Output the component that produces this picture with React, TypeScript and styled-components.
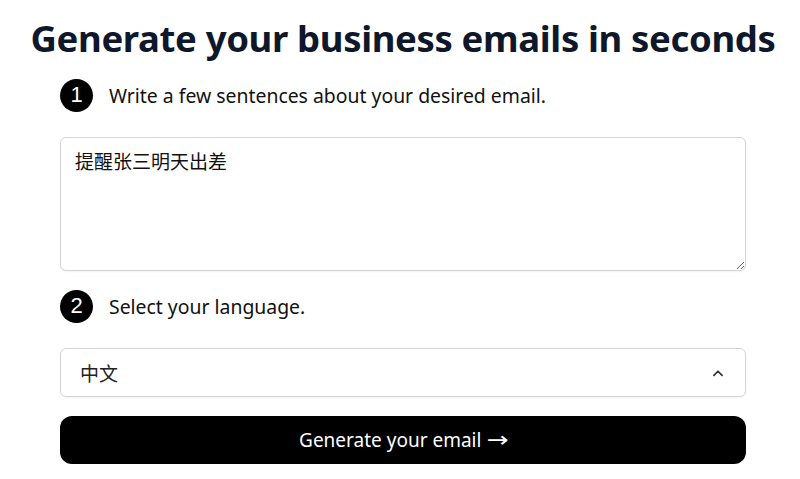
import React from "react";
import styled, { createGlobalStyle } from "styled-components";

const Global = createGlobalStyle`
  html, body { margin: 0; padding: 0; background: #fff; }
  body { font-family: "Noto Sans", "Noto Sans CJK SC", sans-serif; color: #000; }
`;

const Page = styled.main`
  display: flex;
  flex-direction: column;
  align-items: center;
  padding: 12px 0 0 6px;
`;

const Title = styled.h1`
  margin: 0;
  font-family: "Noto Sans", "Noto Sans CJK SC", sans-serif;
  font-weight: 700;
  font-size: 36.5px;
  line-height: 52px;
  color: #0f172a;
  letter-spacing: -0.35px;
  white-space: nowrap;
`;

const Form = styled.div`
  width: 686px;
  display: flex;
  flex-direction: column;
  margin-top: 14px;
`;

const Step = styled.div`
  display: flex;
  align-items: center;
  gap: 16px;
  height: 34px;
`;

const Badge = styled.span`
  width: 33px;
  height: 33px;
  border-radius: 50%;
  background: #000;
  color: #fff;
  display: flex;
  align-items: center;
  justify-content: center;
  font-family: "Liberation Sans", sans-serif;
  font-size: 22px;
`;

const StepLabel = styled.span`
  font-size: 19.4px;
  color: #111;
`;

const TextArea = styled.textarea`
  margin-top: 25px;
  box-sizing: border-box;
  width: 686px;
  height: 134px;
  border: 1px solid #d4d4d8;
  border-radius: 6px;
  padding: 9px 14px;
  font-family: "Noto Sans CJK SC", sans-serif;
  font-size: 19px;
  line-height: 28px;
  color: #111;
  resize: vertical;
  outline: none;
  box-shadow: 0 1px 2px rgba(0,0,0,0.05);
`;

const StepGap = styled.div`
  height: 18px;
`;

const Select = styled.div`
  margin-top: 25px;
  box-sizing: border-box;
  height: 49px;
  border: 1px solid #d4d4d8;
  border-radius: 6px;
  padding: 0 20px 0 19px;
  display: flex;
  align-items: center;
  justify-content: space-between;
  font-family: "Noto Sans CJK SC", sans-serif;
  font-size: 19px;
  color: #222;
  box-shadow: 0 1px 2px rgba(0,0,0,0.05);
`;

const Button = styled.button`
  margin-top: 19px;
  height: 48px;
  border: none;
  border-radius: 12px;
  background: #000;
  color: #fff;
  font-family: "Noto Sans", sans-serif;
  font-size: 19px;
  cursor: pointer;
`;

const Arrow = styled.span`
  font-family: "DejaVu Sans", sans-serif;
  font-size: 21px;
  display: inline-block;
  transform: scaleX(1.25);
  margin-left: 3px;
`;

export default function App() {
  return (
    <>
      <Global />
      <Page>
        <Title>Generate your business emails in seconds</Title>
        <Form>
          <Step>
            <Badge>1</Badge>
            <StepLabel>Write a few sentences about your desired email.</StepLabel>
          </Step>
          <TextArea defaultValue="提醒张三明天出差" />
          <StepGap />
          <Step>
            <Badge>2</Badge>
            <StepLabel>Select your language.</StepLabel>
          </Step>
          <Select>
            <span>中文</span>
            <svg width="14" height="14" viewBox="0 0 24 24" fill="none" stroke="#333" strokeWidth="3" strokeLinecap="round" strokeLinejoin="round">
              <path d="M5 16l7-7 7 7" />
            </svg>
          </Select>
          <Button>
            Generate your email <Arrow>→</Arrow>
          </Button>
        </Form>
      </Page>
    </>
  );
}
